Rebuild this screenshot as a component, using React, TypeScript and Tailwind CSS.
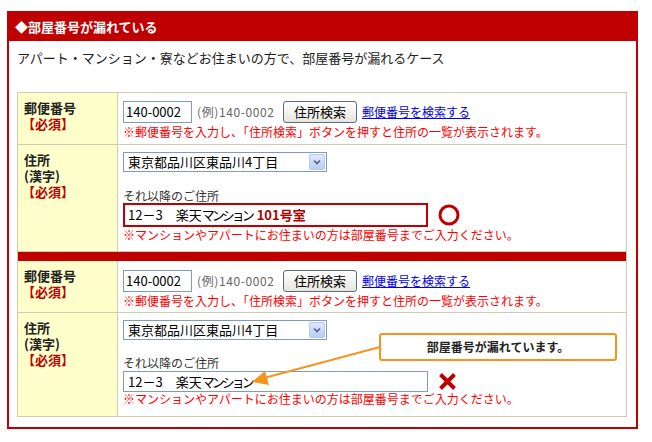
import React from "react"

const FONT = "font-['Noto_Sans_CJK_JP','Noto_Sans_CJK_SC',sans-serif]"

function Label({ lines }: { lines: string[] }) {
  return (
    <div className="w-[100px] shrink-0 border-r border-[#cfcdb0] bg-[#ffffcc] pl-[6px] pt-[7px] text-[13px] font-bold leading-[16px] text-[#222]">
      {lines.map((l, i) => (
        <div key={i}>{l}</div>
      ))}
      <div className="-ml-[2px] text-[#c00000]">【必須】</div>
    </div>
  )
}

function ZipRow({ top }: { top: string }) {
  return (
    <div className="flex h-[52px] border-b border-[#cfcdb0]">
      <Label lines={["郵便番号"]} />
      <div className={`flex-1 pl-[5px] ${top}`}>
        <div className="flex h-[22px] items-center">
          <div className="flex h-[22px] w-[69px] items-center border border-[#7f9db9] bg-white pl-[2px] text-[13px] text-black">
            140-0002
          </div>
          <span className="ml-[5px] inline-block w-[86px] text-[12px] tracking-[0.6px] text-[#666]">(例)140-0002</span>
          <div className="flex h-[22px] w-[74px] items-center justify-center rounded-[3px] border border-[#5a6b82] bg-gradient-to-b from-white to-[#e6e6de] text-[13px] text-black">
            住所検索
          </div>
          <a className="ml-[5px] text-[12px] text-[#0000ee] underline">郵便番号を検索する</a>
        </div>
        <div className="mt-[1px] text-[12px] leading-[16px] text-[#ff0000]">
          ※郵便番号を入力し、「住所検索」ボタンを押すと住所の一覧が表示されます。
        </div>
      </div>
    </div>
  )
}

function SelectBox() {
  return (
    <div className="flex h-[20px] w-[204px] items-center justify-between border border-[#7f9db9] bg-white pl-[4px] pr-px text-[13px] text-black">
      <span>東京都品川区東品川4丁目</span>
      <span className="flex h-[16px] w-[16px] items-center justify-center rounded-[2px] border border-[#b4c8ee] bg-gradient-to-b from-[#dfe8fd] to-[#b9cdf7]">
        <svg width="8" height="6" viewBox="0 0 8 6">
          <path d="M1 1.5 L4 4.5 L7 1.5" fill="none" stroke="#4d6185" strokeWidth="1.6" />
        </svg>
      </span>
    </div>
  )
}

function Note() {
  return (
    <div className="text-[12px] leading-[14px] text-[#ff0000]">
      ※マンションやアパートにお住まいの方は部屋番号までご入力ください。
    </div>
  )
}

function AddrText() {
  return (
    <>
      12－3　楽天<span className="tracking-[-3px]">マンション</span>
    </>
  )
}

export default function App() {
  return (
    <div className={`relative h-[442px] w-[652px] bg-white pl-[7px] pt-[11px] ${FONT}`}>
      <div className="h-[418px] w-[631px] border-2 border-[#c00000]">
        <div className="-mt-px flex h-[29px] items-center bg-[#c00000] pl-[6px] text-[13px] font-bold text-white">
          ◆部屋番号が漏れている
        </div>
        <p className="pl-[8px] pt-[8px] text-[13px] leading-[18px] text-[#222]">
          アパート・マンション・寮などお住まいの方で、部屋番号が漏れるケース
        </p>

        <div className="ml-[8px] mt-[25px] w-[610px] border-x border-t border-[#cfcdb0]">
          <ZipRow top="pt-[8px]" />

          <div className="flex h-[106px]">
            <Label lines={["住所", "(漢字)"]} />
            <div className="flex-1 pl-[5px] pt-[7px]">
              <SelectBox />
              <div className="mt-[17px] text-[12px] leading-[14px] text-[#333]">それ以降のご住所</div>
              <div className="flex items-center">
                <div className="flex h-[24px] w-[305px] items-center border-2 border-[#c00000] bg-white pl-[3px] text-[13px] text-black">
                  <AddrText />
                  <span className="ml-[5px] font-bold text-[#b00000]">101号室</span>
                </div>
                <svg className="ml-[10px]" width="22" height="22" viewBox="0 0 22 22">
                  <circle cx="11" cy="11" r="9" fill="none" stroke="#c00000" strokeWidth="3" />
                </svg>
              </div>
              <div className="mt-[1px]">
                <Note />
              </div>
            </div>
          </div>

          <div className="h-[10px] border-t border-[#cfcdb0] bg-[#c00000]" />

          <ZipRow top="pt-[9px]" />

          <div className="flex h-[104px] border-b border-[#cfcdb0]">
            <Label lines={["住所", "(漢字)"]} />
            <div className="flex-1 pl-[5px] pt-[7px]">
              <SelectBox />
              <div className="mt-[16px] text-[12px] leading-[14px] text-[#333]">それ以降のご住所</div>
              <div className="mt-[1px] flex items-center">
                <div className="flex h-[21px] w-[305px] items-center border border-[#7f9db9] bg-white pl-[4px] text-[13px] text-black">
                  <AddrText />
                </div>
                <svg className="ml-[10px]" width="19" height="19" viewBox="0 0 19 19">
                  <path d="M2.5 2.5 L16.5 16.5 M16.5 2.5 L2.5 16.5" stroke="#c00000" strokeWidth="4" />
                </svg>
              </div>
              <Note />
            </div>
          </div>
        </div>
      </div>

      {/* callout pointing to the missing room number */}
      <svg className="pointer-events-none absolute left-0 top-0" width="652" height="442">
        <line x1="380" y1="347" x2="264" y2="378" stroke="#f7941d" strokeWidth="2" />
        <polygon points="252,382 265,371 269,385" fill="#f7941d" />
      </svg>
      <div className="absolute left-[379px] top-[333px] flex h-[28px] w-[238px] items-center justify-center rounded-[3px] border-2 border-[#f7941d] bg-white text-[12px] font-bold text-[#222]">
        部屋番号が漏れています。
      </div>
    </div>
  )
}
